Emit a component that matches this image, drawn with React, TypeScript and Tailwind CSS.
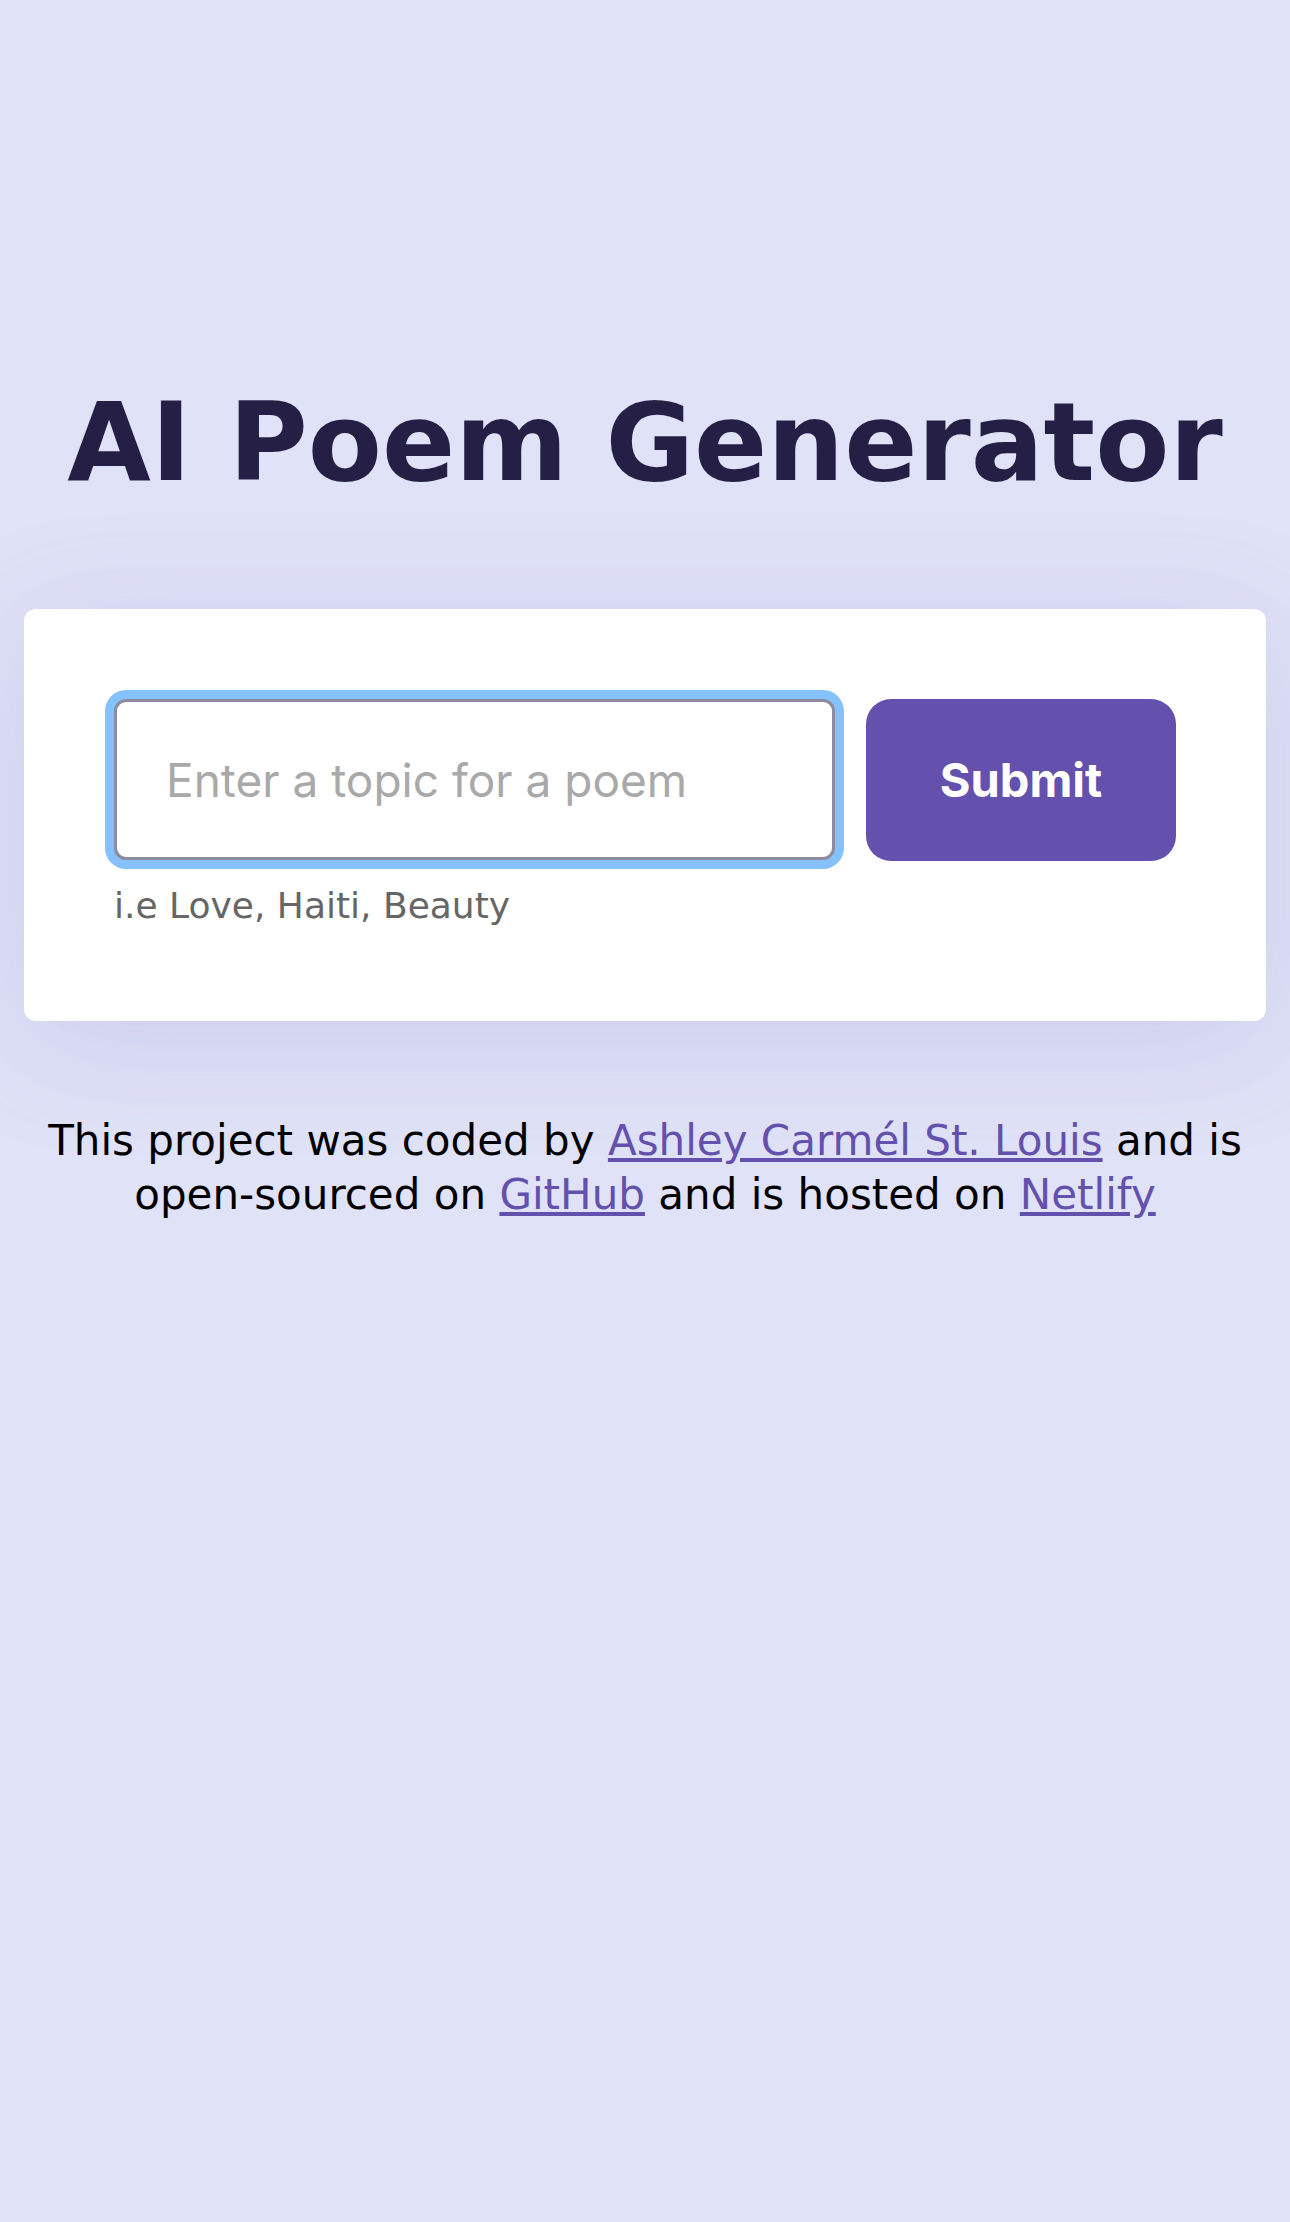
export default function App() {
  return (
    <div className="min-h-screen bg-[#e0e2f7] pt-[380px] font-['DejaVu_Sans',Verdana,sans-serif]">
      <h1 className="text-center text-[108px] font-bold leading-[126px] text-[#261f45]">
        AI Poem Generator
      </h1>

      <div className="mx-[24px] mt-[103px] rounded-[12px] bg-white px-[90px] pt-[90px] pb-[88px] shadow-[0_20px_120px_rgba(110,100,190,0.18)]">
        <form className="flex items-start gap-[31px]" onSubmit={(e) => e.preventDefault()}>
          <div className="w-[721px]">
            <input
              type="text"
              placeholder="Enter a topic for a poem"
              className="h-[161px] w-full rounded-[12px] border-[3px] border-[#8f8b9f] bg-white pl-[49px] font-['Inter',sans-serif] text-[46px] text-[#222] shadow-[0_0_0_9px_#85c1fc] outline-none placeholder:text-[#a9a9a9]"
            />
            <p className="mt-[19px] text-[36px] leading-[54px] text-[#666]">i.e Love, Haiti, Beauty</p>
          </div>
          <button
            type="submit"
            className="h-[162px] w-[310px] rounded-[25px] bg-[#6451ad] font-['Inter',sans-serif] text-[47px] font-bold text-white"
          >
            Submit
          </button>
        </form>
      </div>

      <footer className="mt-[93px] px-[24px] text-center text-[42px] leading-[54px] text-black">
        This project was coded by{" "}
        <a href="#" className="text-[#6451ad] underline">
          Ashley Carmél St. Louis
        </a>{" "}
        and is open-sourced on{" "}
        <a href="#" className="text-[#6451ad] underline">
          GitHub
        </a>{" "}
        and is hosted on{" "}
        <a href="#" className="text-[#6451ad] underline">
          Netlify
        </a>
      </footer>
    </div>
  );
}
